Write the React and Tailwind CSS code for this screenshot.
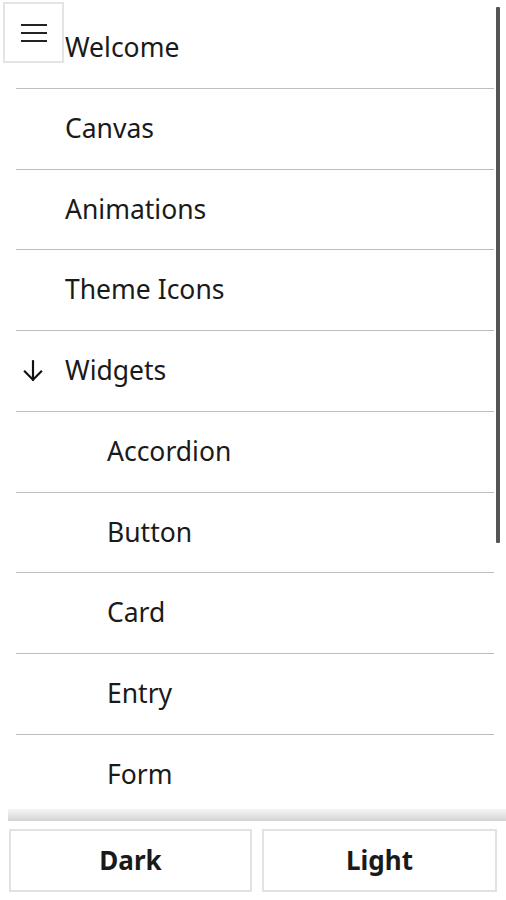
import React from 'react';

const items = [
  { label: 'Welcome' },
  { label: 'Canvas' },
  { label: 'Animations' },
  { label: 'Theme Icons' },
  { label: 'Widgets', open: true },
  { label: 'Accordion', child: true },
  { label: 'Button', child: true },
  { label: 'Card', child: true },
  { label: 'Entry', child: true },
  { label: 'Form', child: true },
];

function ArrowDown() {
  return (
    <svg width="26" height="26" viewBox="0 0 24 24" fill="none" stroke="#111" strokeWidth="2" strokeLinecap="square">
      <path d="M12 3v17" />
      <path d="M4.5 12.5l7.5 7.5 7.5-7.5" />
    </svg>
  );
}

export default function App() {
  return (
    <div
      className="h-screen w-full overflow-hidden bg-white flex flex-col text-[#1a1a1a]"
      style={{ fontFamily: '"Noto Sans", "Open Sans", sans-serif' }}
    >
      <div className="relative flex-1 overflow-hidden">
        {/* nav list */}
        <div className="pt-2 pl-4 pr-3">
          {items.map((item) => (
            <div
              key={item.label}
              className="h-[80.75px] border-b border-[#bdbdbd] flex items-center text-[26.5px]"
            >
              <div className="w-[49px] flex items-center pl-[4px]">
                {item.open && <ArrowDown />}
              </div>
              <span className={item.child ? 'pl-[42px]' : ''}>{item.label}</span>
            </div>
          ))}
        </div>

        {/* scrollbar */}
        <div className="absolute top-[7px] left-[496px] w-[4px] h-[536px] bg-[#555] rounded-[1px]" />

        {/* menu toggle */}
        <button className="absolute top-[2px] left-[3px] w-[61px] h-[61px] bg-white border-2 border-[#e4e4e4] flex flex-col items-center justify-center gap-[6px]">
          <span className="block w-[26px] h-[2px] bg-[#222]" />
          <span className="block w-[26px] h-[2px] bg-[#222]" />
          <span className="block w-[26px] h-[2px] bg-[#222]" />
        </button>
      </div>

      <div className="pl-2 pb-[8px] bg-white">
        <div className="h-3 bg-gradient-to-b from-[#f6f6f6] to-[#d4d4d4]" />
        <div className="flex gap-[10px] pt-2 pl-[1px]">
          <button className="w-[243px] h-[63px] border-2 border-[#e2e2e2] bg-white text-[26px] font-bold">
            Dark
          </button>
          <button className="w-[235px] h-[63px] border-2 border-[#e2e2e2] bg-white text-[26px] font-bold">
            Light
          </button>
        </div>
      </div>
    </div>
  );
}
